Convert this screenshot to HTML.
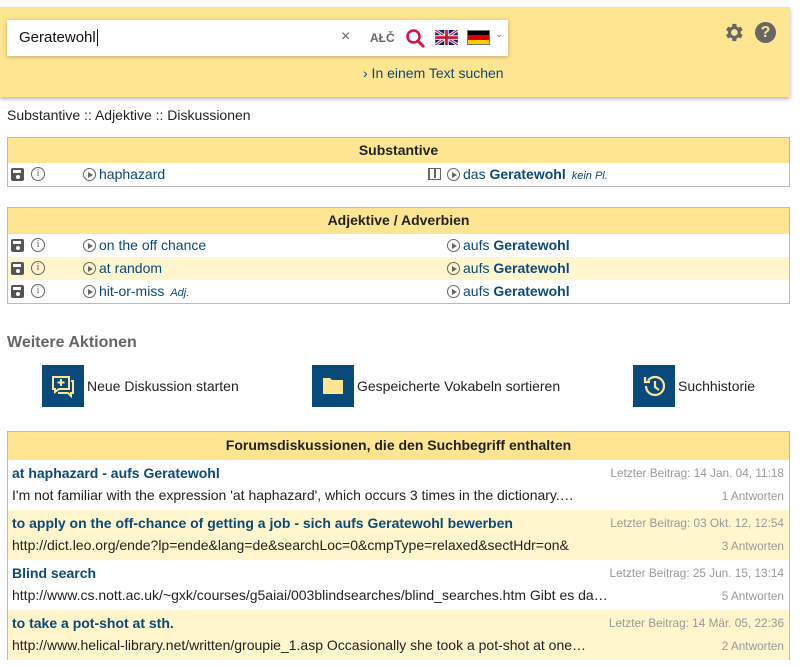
<!DOCTYPE html>
<html><head><meta charset="utf-8"><style>
*{margin:0;padding:0;box-sizing:border-box}
body{width:802px;height:668px;background:#fff;font-family:"Liberation Sans",sans-serif;font-size:14px;color:#222;position:relative;overflow:hidden}
.abs{position:absolute}
.hdr{left:0;top:7px;width:790px;height:90px;background:#fee591;box-shadow:0 2px 4px rgba(0,0,0,.3)}
.search{left:7px;top:20px;width:501px;height:36px;background:#fff;box-shadow:0 1px 4px rgba(0,0,0,.25)}
a,.lk{color:#0b4a78;text-decoration:none}
.tbl{position:absolute;left:7px;width:783px;border:1px solid #bbb}
.th{background:#fee591;text-align:center;font-weight:bold;font-size:14px}
.row{position:relative;height:23px;line-height:22px}
.y{background:#fff6cd}
.ic{position:absolute;top:4px;line-height:0;display:block}
.play{display:inline-block;width:13px;height:13px;border:1.5px solid #666;border-radius:50%;position:relative;vertical-align:-2px;margin-right:3px}
.play:after{content:"";position:absolute;left:3.5px;top:2.5px;border-left:5px solid #666;border-top:3px solid transparent;border-bottom:3px solid transparent}
.info{display:block;width:14px;height:14px;border:1.2px solid #666;border-radius:50%;font:10px "Liberation Serif",serif;color:#666;text-align:center;line-height:12px;font-style:normal}
.disk{display:block;width:13px;height:13px;background:#555;border-radius:2px;position:relative}
.disk:before{content:"";position:absolute;left:2px;top:2px;width:8px;height:3px;background:#fff}
.disk:after{content:"";position:absolute;left:4.5px;top:7px;width:4px;height:4px;background:#fff;border-radius:50%}
.it{font-style:italic;font-size:11px;color:#0b4a78;margin-left:6px}
.act{position:absolute;width:42px;height:42px;background:#0a4a7a;top:365px}
.al{position:absolute;top:378px;font-size:14px}
.fr{position:relative;height:50px;padding:0 4px}
.ft{position:absolute;left:4px;top:5px;font-weight:bold;color:#0b4a78;font-size:14px}
.fb{position:absolute;left:4px;top:27px;font-size:14px;color:#222;white-space:nowrap}
.fd{position:absolute;right:5px;top:6px;font-size:11.8px;color:#999}
.fa{position:absolute;right:5px;top:29px;font-size:11.8px;color:#999}
</style></head><body>
<div class="abs hdr"></div>
<div class="abs search">
<span class="abs" style="left:12px;top:9px;font-size:15px;color:#111">Geratewohl<span style="border-left:1px solid #111;margin-left:1px"></span></span>
<span class="abs" style="left:334px;top:8px;font-size:16px;color:#666">×</span>
<span class="abs" style="left:363px;top:11px;font-size:12px;font-weight:bold;color:#666">AŁČ</span>
<svg class="abs" style="left:398px;top:8px" width="22" height="22" viewBox="0 0 22 22"><circle cx="8.5" cy="8.5" r="6" fill="none" stroke="#d6104a" stroke-width="2.5"/><line x1="13" y1="13" x2="19" y2="19" stroke="#d6104a" stroke-width="3"/></svg>
<svg class="abs" style="left:428px;top:10px" width="23" height="15" viewBox="0 0 60 40"><rect width="60" height="40" fill="#012169"/><path d="M0,0L60,40M60,0L0,40" stroke="#fff" stroke-width="8"/><path d="M0,0L60,40M60,0L0,40" stroke="#c8102e" stroke-width="3"/><path d="M30,0V40M0,20H60" stroke="#fff" stroke-width="12"/><path d="M30,0V40M0,20H60" stroke="#c8102e" stroke-width="7"/></svg>
<div class="abs" style="left:460px;top:10px;width:23px;height:15px;border:1px solid #777"><div style="height:33.3%;background:#000"></div><div style="height:33.3%;background:#d00"></div><div style="height:33.4%;background:#fc0"></div></div>
<span class="abs" style="left:488px;top:9px;font-size:10px;color:#777">⌄</span>
</div>
<svg class="abs" style="left:722px;top:21px" width="23" height="23" viewBox="0 0 24 24"><path fill="#666" d="M19.4 13a7.5 7.5 0 000-2l2.1-1.6-2-3.5-2.5 1a7 7 0 00-1.7-1L14.9 3h-4l-.4 2.9a7 7 0 00-1.7 1l-2.5-1-2 3.5L6.4 11a7.5 7.5 0 000 2l-2.1 1.6 2 3.5 2.5-1a7 7 0 001.7 1l.4 2.9h4l.4-2.9a7 7 0 001.7-1l2.5 1 2-3.5zM12.9 15.5a3.5 3.5 0 110-7 3.5 3.5 0 010 7z"/></svg>
<div class="abs" style="left:755px;top:22px;width:21px;height:21px;border-radius:50%;background:#666;color:#fee591;font-weight:bold;font-size:16px;text-align:center;line-height:21px">?</div>
<div class="abs lk" style="left:363px;top:65px;font-size:14px">› In einem Text suchen</div>
<div class="abs" style="left:7px;top:107px;font-size:14px">Substantive :: Adjektive :: Diskussionen</div>

<div class="tbl" style="top:137px">
<div class="th" style="height:25px;line-height:24px">Substantive</div>
<div class="row"><span class="ic" style="left:3px;top:5px"><i class="disk"></i></span><span class="ic" style="left:23px"><i class="info">i</i></span>
<span class="abs" style="left:75px"><i class="play"></i><span class="lk">haphazard</span></span>
<span class="abs" style="left:420px;top:5px;width:13px;height:12px;border:1.5px solid #666;border-left-width:2px"><span style="position:absolute;left:4px;top:0;width:1.5px;height:9px;background:#666"></span></span>
<span class="abs" style="left:439px"><i class="play"></i><span class="lk">das <b>Geratewohl</b></span><span class="it">kein Pl.</span></span></div>
</div>

<div class="tbl" style="top:207px">
<div class="th" style="height:26px;line-height:25px">Adjektive / Adverbien</div>
<div class="row"><span class="ic" style="left:3px;top:5px"><i class="disk"></i></span><span class="ic" style="left:23px"><i class="info">i</i></span><span class="abs" style="left:75px"><i class="play"></i><span class="lk">on the off chance</span></span><span class="abs" style="left:439px"><i class="play"></i><span class="lk">aufs <b>Geratewohl</b></span></span></div>
<div class="row y"><span class="ic" style="left:3px;top:5px"><i class="disk"></i></span><span class="ic" style="left:23px"><i class="info">i</i></span><span class="abs" style="left:75px"><i class="play"></i><span class="lk">at random</span></span><span class="abs" style="left:439px"><i class="play"></i><span class="lk">aufs <b>Geratewohl</b></span></span></div>
<div class="row"><span class="ic" style="left:3px;top:5px"><i class="disk"></i></span><span class="ic" style="left:23px"><i class="info">i</i></span><span class="abs" style="left:75px"><i class="play"></i><span class="lk">hit-or-miss</span><span class="it">Adj.</span></span><span class="abs" style="left:439px"><i class="play"></i><span class="lk">aufs <b>Geratewohl</b></span></span></div>
</div>

<div class="abs" style="left:7px;top:334px;font-size:16px;font-weight:bold;color:#666">Weitere Aktionen</div>
<div class="act" style="left:42px"><svg width="42" height="42" viewBox="0 0 42 42"><path d="M11 12h16v12h-10l-4 3v-3h-2z" fill="none" stroke="#fee591" stroke-width="2"/><path d="M19 14v7M15.5 17.5h7" stroke="#fee591" stroke-width="2"/><path d="M29 16h2v12h-2v3l-3-3h-10" fill="none" stroke="#fee591" stroke-width="2"/></svg></div>
<div class="al" style="left:87px">Neue Diskussion starten</div>
<div class="act" style="left:312px"><svg width="42" height="42" viewBox="0 0 42 42"><path d="M11 13h7l2 2h11v14h-20z" fill="#fee591"/></svg></div>
<div class="al" style="left:357px">Gespeicherte Vokabeln sortieren</div>
<div class="act" style="left:633px"><svg width="42" height="42" viewBox="0 0 42 42"><path d="M13 21a9 9 0 109-9 9 9 0 00-7 3.5" fill="none" stroke="#fee591" stroke-width="2.2"/><path d="M12 12v5h5" fill="none" stroke="#fee591" stroke-width="2.2"/><path d="M22 16v6l4 3" fill="none" stroke="#fee591" stroke-width="2.2"/></svg></div>
<div class="al" style="left:678px">Suchhistorie</div>

<div class="tbl" style="top:431px;height:229px">
<div class="th" style="height:28px;line-height:27px">Forumsdiskussionen, die den Suchbegriff enthalten</div>
<div class="fr"><span class="ft">at haphazard - aufs Geratewohl</span><span class="fd">Letzter Beitrag: 14 Jan. 04, 11:18</span><span class="fb">I'm not familiar with the expression 'at haphazard', which occurs 3 times in the dictionary.…</span><span class="fa">1 Antworten</span></div>
<div class="fr y"><span class="ft">to apply on the off-chance of getting a job - sich aufs Geratewohl bewerben</span><span class="fd">Letzter Beitrag: 03 Okt. 12, 12:54</span><span class="fb">http://dict.leo.org/ende?lp=ende&amp;lang=de&amp;searchLoc=0&amp;cmpType=relaxed&amp;sectHdr=on&amp;</span><span class="fa">3 Antworten</span></div>
<div class="fr"><span class="ft">Blind search</span><span class="fd">Letzter Beitrag: 25 Jun. 15, 13:14</span><span class="fb">http://www.cs.nott.ac.uk/~gxk/courses/g5aiai/003blindsearches/blind_searches.htm Gibt es da…</span><span class="fa">5 Antworten</span></div>
<div class="fr y"><span class="ft">to take a pot-shot at sth.</span><span class="fd">Letzter Beitrag: 14 Mär. 05, 22:36</span><span class="fb">http://www.helical-library.net/written/groupie_1.asp Occasionally she took a pot-shot at one…</span><span class="fa">2 Antworten</span></div>
</div>
</body></html>
